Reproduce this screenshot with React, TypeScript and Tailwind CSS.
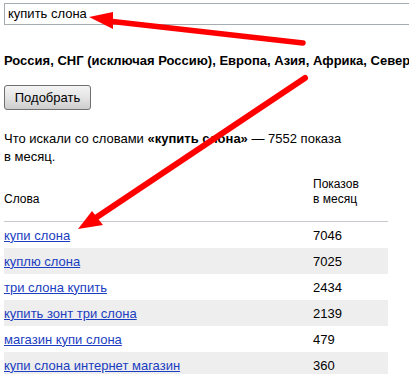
import React from "react";

const rows: [string, string][] = [
  ["купи слона", "7046"],
  ["куплю слона", "7025"],
  ["три слона купить", "2434"],
  ["купить зонт три слона", "2139"],
  ["магазин купи слона", "479"],
  ["купи слона интернет магазин", "360"],
];

export default function App() {
  return (
    <div
      className="relative w-[409px] h-[374px] overflow-hidden bg-white pl-[4px] text-black"
      style={{ fontFamily: '"Liberation Sans", Arial, sans-serif' }}
    >
      <div className="mt-[3px] h-[22px] w-[440px] border border-[#a5acb2] pl-[3px] text-[13px] leading-[20px]">
        купить слона
      </div>
      <div className="mt-[28px] whitespace-nowrap text-[13px] font-bold leading-[15px]">
        Россия, СНГ (исключая Россию), Европа, Азия, Африка, Северная Америка
      </div>
      <button className="mt-[17px] block h-[25px] w-[87px] rounded-[3px] border border-[#707070] bg-gradient-to-b from-[#f4f4f4] via-[#e4e4e4] to-[#cdcdcd] text-[13px] leading-[22px] text-black">
        Подобрать
      </button>
      <p className="mt-[20px] w-[380px] text-[13px] leading-[18px]">
        Что искали со словами <b>«купить слона»</b> — 7552 показа
        <br />в месяц.
      </p>
      <div className="mt-[11px] w-[384px]">
        <div className="flex items-end border-b border-[#c8c8d0] pb-[14px] text-[12px] leading-[15px]">
          <div className="flex-1">Слова</div>
          <div className="w-[75px]">
            Показов
            <br />в месяц
          </div>
        </div>
        {rows.map(([w, n], i) => (
          <div
            key={w}
            className={
              "flex h-[26px] items-center pt-[1px] text-[13px] " +
              (i % 2 === 1 ? "bg-[#eeeeee]" : "bg-white")
            }
          >
            <a href="#" className="flex-1 text-[#1a3dc1] underline">
              {w}
            </a>
            <div className="w-[75px]">{n}</div>
          </div>
        ))}
      </div>
      <svg
        className="pointer-events-none absolute left-0 top-0"
        width="409"
        height="374"
        viewBox="0 0 409 374"
      >
        <line x1="108" y1="21" x2="303" y2="43" stroke="#ff0000" strokeWidth="5.5" strokeLinecap="round" />
        <polygon points="89,17 113,12 113,29" fill="#ff0000" />
        <line x1="97" y1="217" x2="305" y2="78" stroke="#ff0000" strokeWidth="6" strokeLinecap="round" />
        <polygon points="78,229 92,211 103,225" fill="#ff0000" />
      </svg>
    </div>
  );
}
